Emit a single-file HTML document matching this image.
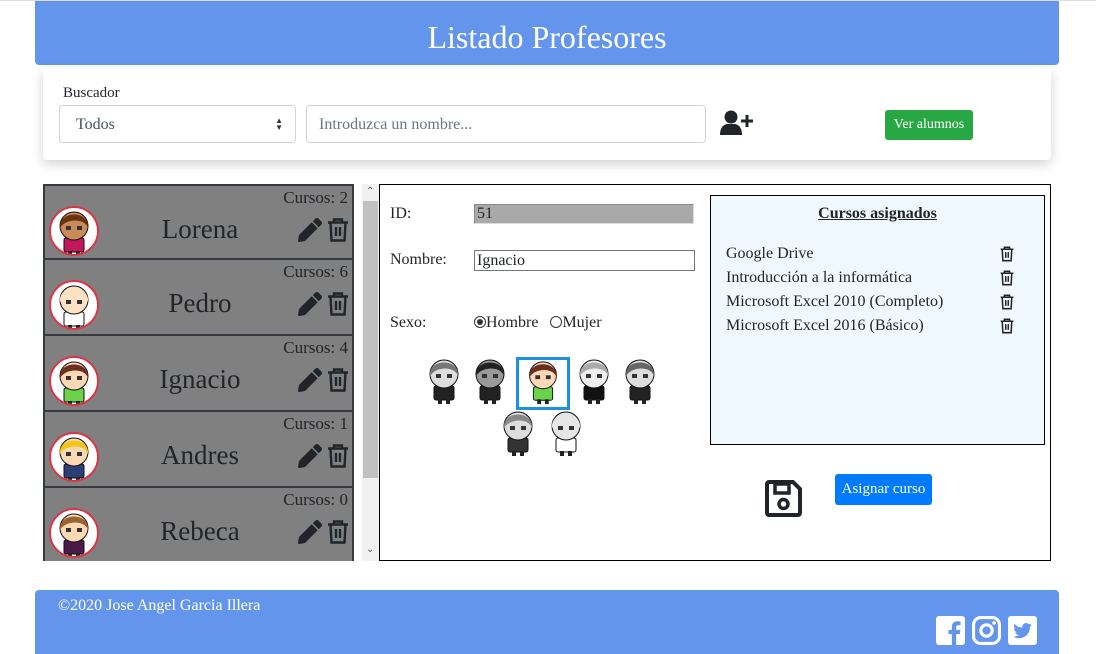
<!DOCTYPE html>
<html><head><meta charset="utf-8"><style>
*{box-sizing:border-box;margin:0;padding:0}
body{width:1096px;height:654px;position:relative;background:#fff;font-family:"Liberation Serif",serif;color:#212529;overflow:hidden}
.a{position:absolute}
.hdr{left:35px;top:1px;width:1024px;height:64px;background:#6495ed;border-radius:0 0 4px 4px;color:#fff;font-size:32px;text-align:center;line-height:72px}
.card{left:43px;top:68px;width:1008px;height:92px;background:#fff;box-shadow:0 4px 12px rgba(0,0,0,.18);border-radius:4px}
.sel{left:59px;top:105px;width:237px;height:38px;border:1px solid #ced4da;border-radius:4px;font-size:16px;padding:10px 16px;color:#495057}
.inp{left:306px;top:105px;width:400px;height:38px;border:1px solid #ced4da;border-radius:4px;font-size:16px;padding:10px 12px;color:#6c757d}
.btn{color:#fff;font-size:15px;border-radius:3px;text-align:center}
.list{left:43px;top:184px;width:311px;height:377px;overflow:hidden;border-left:2px solid #343a40;border-right:2px solid #343a40}
.item{position:relative;height:76px;background:#808080;border-bottom:2px solid #343a40}
.item:first-child{border-top:2px solid #343a40;height:76px}
.av{position:absolute;left:4px;top:20px;width:50px;height:50px;border-radius:50%;background:#fff;border:2px solid #dc3545;overflow:hidden}
.nm{position:absolute;left:90px;width:130px;text-align:center;top:28px;font-size:27px}
.cu{position:absolute;right:4px;top:2px;font-size:17px}
.ic{position:absolute;top:32px}
.box{left:379px;top:184px;width:672px;height:377px;border:1px solid #000}
.lb{font-size:16px}
.ftr{left:35px;top:590px;width:1024px;height:64px;background:#6495ed;border-radius:4px 4px 0 0;color:#fff;font-size:16px;padding:7px 23px}
.ci{left:726px;font-size:16px}
</style></head><body>
<div class="a" style="left:0;top:0;width:1096px;height:1px;background:#ddd"></div>
<svg width="0" height="0" style="position:absolute">
<defs>
<symbol id="pen" viewBox="0 0 512 512"><path fill="#212529" d="M497.9 142.1l-46.1 46.1c-4.7 4.7-12.3 4.7-17 0l-111-111c-4.7-4.7-4.7-12.3 0-17l46.1-46.1c18.7-18.7 49.1-18.7 67.9 0l60.1 60.1c18.8 18.7 18.8 49.1 0 67.9zM284.2 99.8L21.6 362.4.4 483.9c-2.9 16.4 11.4 30.6 27.8 27.8l121.5-21.3 262.6-262.6c4.7-4.7 4.7-12.3 0-17l-111-111c-4.8-4.7-12.4-4.7-17.1 0z"/></symbol>
<symbol id="tr" viewBox="0 0 22 24"><path fill="none" stroke="#212529" stroke-width="2.4" d="M1 4.5h20M7 4.5V1.5h8v3M3.5 4.5l1 18h13l1-18M9 9v9M13 9v9"/></symbol>
<symbol id="kid" viewBox="0 0 40 50"><rect x="10" y="30" width="20" height="14" rx="2" fill="var(--b)" stroke="#111" stroke-width="1"/><rect x="14" y="43" width="4" height="5" fill="#222"/><rect x="22" y="43" width="4" height="5" fill="#222"/><circle cx="20" cy="18" r="14" fill="var(--s)" stroke="#111" stroke-width="1"/><path d="M6 20C4 2 36 2 34 20C31 10 12 10 6 20z" fill="var(--h)"/><rect x="12" y="18" width="5" height="4" fill="#333"/><rect x="23" y="18" width="5" height="4" fill="#333"/></symbol>
</defs></svg>

<div class="a hdr">Listado Profesores</div>
<div class="a card"></div>
<div class="a lb" style="left:63px;top:85px;font-size:15px">Buscador</div>
<div class="a sel">Todos<span style="position:absolute;right:12px;top:11px;font-size:8px;line-height:7px;color:#333">▲<br>▼</span></div>
<div class="a inp">Introduzca un nombre...</div>
<svg class="a" style="left:720px;top:110px" width="33" height="26" viewBox="0 0 33 26"><circle cx="11" cy="7" r="6.5" fill="#212529"/><path d="M0 25c0-8 4-11 8-11h6c4 0 8 3 8 11z" fill="#212529"/><path d="M27 5v12M21 11h12" stroke="#212529" stroke-width="3"/></svg>
<div class="a btn" style="left:885px;top:110px;width:88px;height:30px;background:#28a745;line-height:30px;font-size:14px">Ver alumnos</div>

<div class="a list">
<div class="item"><div class="av"><svg width="46" height="50" viewBox="0 0 40 48"><use href="#kid" style="--s:#c98a5a;--h:#6b3410;--b:#c2185b"/></svg></div><div class="cu">Cursos: 2</div><div class="nm">Lorena</div><svg class="ic" style="left:253px" width="24" height="24"><use href="#pen"/></svg><svg class="ic" style="left:282px" width="22" height="24"><use href="#tr"/></svg></div>
<div class="item"><div class="av"><svg width="46" height="50" viewBox="0 0 40 48"><use href="#kid" style="--s:#fde3c4;--h:#fde3c4;--b:#fff"/></svg></div><div class="cu">Cursos: 6</div><div class="nm">Pedro</div><svg class="ic" style="left:253px" width="24" height="24"><use href="#pen"/></svg><svg class="ic" style="left:282px" width="22" height="24"><use href="#tr"/></svg></div>
<div class="item"><div class="av"><svg width="46" height="50" viewBox="0 0 40 48"><use href="#kid" style="--s:#fcd9b4;--h:#6b2e22;--b:#6bd34a"/></svg></div><div class="cu">Cursos: 4</div><div class="nm">Ignacio</div><svg class="ic" style="left:253px" width="24" height="24"><use href="#pen"/></svg><svg class="ic" style="left:282px" width="22" height="24"><use href="#tr"/></svg></div>
<div class="item"><div class="av"><svg width="46" height="50" viewBox="0 0 40 48"><use href="#kid" style="--s:#fcd9b4;--h:#f5c518;--b:#2c3e7a"/></svg></div><div class="cu">Cursos: 1</div><div class="nm">Andres</div><svg class="ic" style="left:253px" width="24" height="24"><use href="#pen"/></svg><svg class="ic" style="left:282px" width="22" height="24"><use href="#tr"/></svg></div>
<div class="item"><div class="av"><svg width="46" height="50" viewBox="0 0 40 48"><use href="#kid" style="--s:#fcd9b4;--h:#9a6330;--b:#4a1a4a"/></svg></div><div class="cu">Cursos: 0</div><div class="nm">Rebeca</div><svg class="ic" style="left:253px" width="24" height="24"><use href="#pen"/></svg><svg class="ic" style="left:282px" width="22" height="24"><use href="#tr"/></svg></div>
</div>
<div class="a" style="left:362px;top:184px;width:17px;height:377px;background:#f1f1f1"></div>
<div class="a" style="left:363px;top:201px;width:15px;height:277px;background:#c1c1c1"></div>
<div class="a" style="left:366px;top:186px;font-size:10px;color:#555">&#8963;</div>
<div class="a" style="left:366px;top:544px;font-size:10px;color:#555">&#8964;</div>

<div class="a box"></div>
<div class="a lb" style="left:390px;top:205px">ID:</div>
<div class="a" style="left:474px;top:204px;width:220px;height:20px;background:#a9a9a9;border:1px solid #888;border-right-color:#ddd;border-bottom-color:#ddd;font-size:16px;padding:0 2px;line-height:18px">51</div>
<div class="a lb" style="left:390px;top:251px">Nombre:</div>
<div class="a" style="left:474px;top:250px;width:221px;height:21px;border:1px solid #767676;font-size:16px;padding:0 2px;line-height:20px">Ignacio</div>
<div class="a lb" style="left:390px;top:314px">Sexo:</div>
<div class="a lb" style="left:474px;top:314px"><span style="display:inline-block;width:12px;height:12px;border:1px solid #333;border-radius:50%;vertical-align:-1px;position:relative"><span style="position:absolute;left:2px;top:2px;width:6px;height:6px;border-radius:50%;background:#333"></span></span>Hombre &nbsp;&nbsp;<span style="display:inline-block;width:12px;height:12px;border:1px solid #333;border-radius:50%;vertical-align:-1px"></span>Mujer</div>

<svg class="a" style="left:424px;top:356px" width="40" height="50"><use href="#kid" style="--s:#ddd;--h:#777;--b:#222"/></svg>
<svg class="a" style="left:470px;top:356px" width="40" height="50"><use href="#kid" style="--s:#999;--h:#222;--b:#222"/></svg>
<div class="a" style="left:516px;top:357px;width:54px;height:53px;border:3px solid #1e90e0"></div>
<svg class="a" style="left:523px;top:358px" width="40" height="48"><use href="#kid" style="--s:#fcd9b4;--h:#6b2e22;--b:#6bd34a"/></svg>
<svg class="a" style="left:574px;top:356px" width="40" height="50"><use href="#kid" style="--s:#eee;--h:#aaa;--b:#111"/></svg>
<svg class="a" style="left:620px;top:356px" width="40" height="50"><use href="#kid" style="--s:#ddd;--h:#666;--b:#222"/></svg>
<svg class="a" style="left:498px;top:408px" width="40" height="50"><use href="#kid" style="--s:#ddd;--h:#888;--b:#333"/></svg>
<svg class="a" style="left:546px;top:408px" width="40" height="50"><use href="#kid" style="--s:#e6e6e6;--h:#e6e6e6;--b:#fff"/></svg>

<div class="a" style="left:710px;top:195px;width:335px;height:250px;background:#f0f8ff;border:1px solid #000"></div>
<div class="a" style="left:710px;top:205px;width:335px;text-align:center;font-size:16px;font-weight:bold;text-decoration:underline">Cursos asignados</div>
<div class="a ci" style="top:245px">Google Drive</div>
<div class="a ci" style="top:269px">Introducción a la informática</div>
<div class="a ci" style="top:293px">Microsoft Excel 2010 (Completo)</div>
<div class="a ci" style="top:317px">Microsoft Excel 2016 (Básico)</div>
<svg class="a" style="left:1000px;top:246px" width="14" height="16"><use href="#tr"/></svg>
<svg class="a" style="left:1000px;top:270px" width="14" height="16"><use href="#tr"/></svg>
<svg class="a" style="left:1000px;top:294px" width="14" height="16"><use href="#tr"/></svg>
<svg class="a" style="left:1000px;top:318px" width="14" height="16"><use href="#tr"/></svg>

<svg class="a" style="left:765px;top:480px" width="37" height="37" viewBox="0 0 37 37"><path d="M4 2h24l7 7v24a2 2 0 0 1-2 2H4a2 2 0 0 1-2-2V4a2 2 0 0 1 2-2z" fill="none" stroke="#212529" stroke-width="4"/><rect x="10" y="4" width="14" height="9" fill="none" stroke="#212529" stroke-width="3.5"/><circle cx="18.5" cy="24" r="4.5" fill="none" stroke="#212529" stroke-width="3.5"/></svg>
<div class="a btn" style="left:835px;top:474px;width:97px;height:31px;background:#007bff;line-height:31px">Asignar curso</div>

<div class="a ftr">©2020 Jose Angel Garcia Illera</div>
<svg class="a" style="left:936px;top:616px" width="29" height="29" viewBox="0 0 28 28"><rect width="28" height="28" rx="3" fill="#fff"/><path d="M19.5 28V17.5h3.5l.5-4h-4v-2.6c0-1.2.3-2 2-2h2.2V5.3c-.4 0-1.7-.2-3.2-.2-3.1 0-5.2 1.9-5.2 5.4v3H12v4h3.3V28z" fill="#6495ed"/></svg>
<svg class="a" style="left:972px;top:616px" width="29" height="29" viewBox="0 0 28 28"><rect x="1.5" y="1.5" width="25" height="25" rx="7" fill="none" stroke="#fff" stroke-width="3"/><circle cx="14" cy="14" r="5.5" fill="none" stroke="#fff" stroke-width="3"/><circle cx="21.3" cy="6.7" r="1.7" fill="#fff"/></svg>
<svg class="a" style="left:1008px;top:616px" width="29" height="29" viewBox="0 0 28 28"><rect width="28" height="28" rx="3" fill="#fff"/><path d="M23 8.5c-.7.3-1.4.5-2.1.6.8-.5 1.3-1.2 1.6-2-.7.4-1.5.7-2.3.9a3.7 3.7 0 0 0-6.3 3.4c-3.1-.2-5.800-1.6-7.6-3.9-1 1.7-.5 3.8 1.1 4.9-.6 0-1.2-.2-1.700-.5 0 1.8 1.3 3.3 3 3.7-.5.2-1.1.2-1.7.1.5 1.5 1.9 2.6 3.5 2.6A7.4 7.4 0 0 1 5 19.8 10.5 10.5 0 0 0 21.2 10.4c.7-.5 1.3-1.1 1.8-1.9z" fill="#6495ed"/></svg>
</body></html>
